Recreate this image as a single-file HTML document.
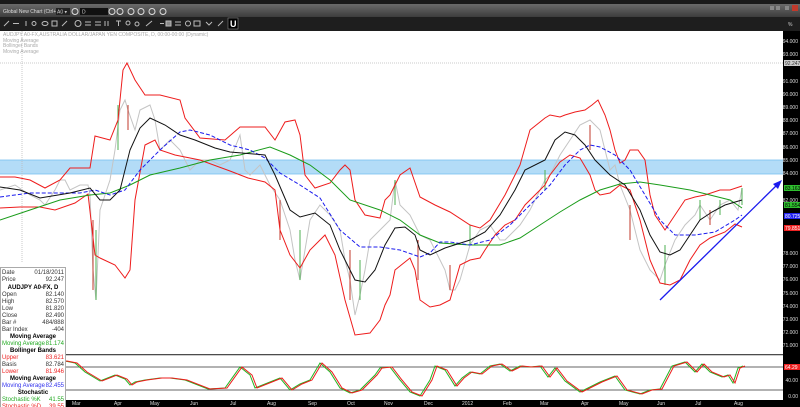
<!DOCTYPE html>
<html><head><meta charset="utf-8"><style>
html,body{margin:0;padding:0;background:#000;width:800px;height:407px;overflow:hidden;font-family:"Liberation Sans",sans-serif}
#wrap{position:relative;width:800px;height:407px}
</style></head><body><div id="wrap">
<svg width="800" height="407" viewBox="0 0 800 407" style="position:absolute;left:0;top:0" font-family="Liberation Sans, sans-serif">
<defs><linearGradient id="tb" x1="0" y1="0" x2="0" y2="1"><stop offset="0" stop-color="#6a6a6a"/><stop offset="1" stop-color="#3c3c3c"/></linearGradient></defs>
<rect x="0" y="0" width="800" height="4" fill="#1a1a1a"/>
<rect x="0" y="4" width="800" height="13" fill="url(#tb)"/>
<rect x="0" y="17" width="800" height="14" fill="#1e1e1e"/>
<text x="3" y="13" font-size="5" fill="#ddd">Global New Chart (Ctrl+1)</text>
<rect x="56" y="8" width="14" height="7" fill="#222"/><text x="57" y="13.5" font-size="5" fill="#ccc">A0 ▾</text>
<circle cx="75" cy="11.5" r="3" fill="none" stroke="#ddd"/>
<rect x="80" y="8" width="28" height="7" fill="#111"/><text x="82" y="13.5" font-size="5" fill="#ccc">D</text>
<circle cx="112" cy="11.5" r="3" fill="none" stroke="#ddd"/>
<circle cx="120" cy="11.5" r="3" fill="none" stroke="#ddd"/>
<circle cx="131" cy="11.5" r="3" fill="none" stroke="#ddd"/>
<circle cx="141" cy="11.5" r="3" fill="none" stroke="#ddd"/>
<circle cx="152" cy="11.5" r="3" fill="none" stroke="#ddd"/>
<circle cx="163" cy="11.5" r="3" fill="none" stroke="#ddd"/>
<g stroke="#bbb" stroke-width="1" fill="none">
<path d="M4 26 L9 21"/><path d="M13 23.5 H19"/><path d="M26 21 V26"/><circle cx="34" cy="23.5" r="2"/><ellipse cx="45" cy="23.5" rx="3" ry="2"/><rect x="52" y="21" width="5" height="5"/><path d="M62 26 L67 21"/>
<circle cx="78" cy="23.5" r="3"/><path d="M85 22H91M85 25H91"/><path d="M95 22H101M95 25H101"/><path d="M105 21V26M108 21V26"/>
<path d="M116 21H121M118.5 21V26"/><circle cx="128" cy="23" r="2"/><circle cx="137" cy="24" r="2"/>
<path d="M146 26L152 21"/><path d="M160 23.5H164"/><rect x="166" y="21" width="5" height="5" fill="#888"/><path d="M175 22H181M175 25H181"/><circle cx="188" cy="23.5" r="2.5"/><rect x="194" y="21" width="6" height="5"/><path d="M206 22L209 25L212 22"/><path d="M218 26L223 21"/>
</g>
<rect x="228" y="18" width="10" height="11" fill="#000" stroke="#888" stroke-width="0.6"/>
<text x="230" y="27" font-size="9" font-weight="bold" fill="#fff">U</text>
<rect x="770" y="6" width="4" height="4" fill="#888"/><rect x="776" y="6" width="4" height="4" fill="#888"/><rect x="785" y="6" width="4" height="4" fill="#888"/><rect x="792" y="5" width="6" height="6" fill="#c0392b"/>
<text x="788" y="26" font-size="5" fill="#ccc">%</text>
<rect x="0" y="31" width="783" height="323" fill="#fff"/>
<rect x="0" y="355" width="783" height="45" fill="#fff"/>
<rect x="0" y="400" width="800" height="7" fill="#000"/>
<rect x="783" y="31" width="17" height="376" fill="#000"/>
<rect x="0" y="160" width="783" height="14" fill="#b3dcf7"/>
<path d="M0 160H783M0 174H783" stroke="#74bff0" stroke-width="0.8"/>
<path d="M0 63H783" stroke="#bbb" stroke-width="0.8" stroke-dasharray="1,1"/>
<path d="M22 31V262" stroke="#bbb" stroke-width="0.8" stroke-dasharray="1,1"/>
<polyline fill="none" stroke="#c4c4c4" stroke-width="1" points="0,190 15,185 30,195 40,200 45,205 55,190 60,180 65,180 70,190 80,185 88,185 90,195 93,270 96,300 100,210 110,180 115,150 120,110 125,100 128,110 135,130 140,110 150,105 155,120 160,150 170,140 180,150 190,170 200,160 210,160 220,165 230,160 240,135 245,170 250,175 260,165 270,185 280,200 290,230 295,260 300,280 310,220 320,205 330,215 340,230 345,260 350,280 355,315 360,295 365,270 370,240 380,230 390,220 395,180 400,205 410,215 420,235 430,240 440,260 445,270 450,290 455,290 460,280 470,245 480,230 490,225 500,240 505,240 510,235 520,225 530,210 540,190 545,180 550,175 560,155 570,140 580,125 590,120 600,130 610,170 615,165 620,185 630,210 640,250 650,270 660,280 665,265 675,240 685,225 695,215 700,205 710,220 720,205 730,200 738,210 742,188"/>
<g stroke-width="1">
<path d="M96 300V230M118 150V105M300 280V230M360 300V260M395 205V180M470 245V225M545 190V170M665 285V245M742 205V188M700 220V200M720 215V200" stroke="#4caf50"/>
<path d="M93 220V290M128 105V130M280 200V240M350 250V300M418 240V280M450 265V290M590 125V150M630 205V240M710 210V225" stroke="#c0392b"/>
</g>
<polyline fill="none" stroke="#ee1c1c" stroke-width="1" points="0,177 15,177 30,180 45,188 60,180 70,168 90,168 95,136 110,140 118,120 123,70 127,63 135,80 145,95 160,95 180,100 185,118 200,138 225,140 240,127 265,127 275,140 285,122 295,120 300,135 305,175 315,188 330,183 340,170 345,165 350,170 355,200 365,215 380,218 385,200 390,195 395,185 400,175 410,168 420,197 435,205 450,212 470,225 480,228 490,220 505,195 520,165 530,130 545,118 550,115 560,117 565,115 575,112 585,110 592,105 598,100 605,115 610,130 615,150 620,163 625,160 630,150 638,150 645,160 650,195 655,215 665,230 675,215 685,200 695,197 705,195 720,190 730,190 742,186"/>
<polyline fill="none" stroke="#ee1c1c" stroke-width="1" points="0,208 20,207 40,207 55,210 75,203 88,194 95,255 100,258 115,265 125,278 130,270 135,200 145,145 155,140 160,150 175,155 200,160 230,171 248,178 265,182 275,190 280,230 290,255 300,268 310,250 320,240 325,235 335,255 345,300 355,335 370,333 380,320 385,305 390,295 395,270 405,262 410,258 415,270 420,300 430,307 440,305 450,300 460,265 470,260 480,258 485,250 495,235 505,225 515,220 525,205 540,190 545,185 550,175 560,162 570,155 580,158 590,175 595,190 600,195 610,193 620,185 630,190 640,220 650,260 660,283 670,285 680,280 690,260 700,245 710,238 725,232 735,224 742,227"/>
<polyline fill="none" stroke="#1a9c1a" stroke-width="1" points="0,220 30,210 60,200 90,195 110,193 130,185 150,175 180,168 210,160 240,155 270,147 290,155 310,165 330,180 350,200 380,210 400,220 420,235 440,243 470,245 500,245 520,238 540,225 560,212 580,200 600,190 620,184 640,182 660,185 690,190 710,195 730,200 742,208"/>
<polyline fill="none" stroke="#1b1bee" stroke-width="1" stroke-dasharray="4,2" points="0,197 30,193 80,193 95,190 110,195 125,190 140,170 160,150 180,132 190,130 210,135 230,145 250,150 265,158 280,173 300,185 320,198 340,230 360,247 380,247 400,250 420,257 430,253 440,242 450,242 470,245 490,240 510,225 530,205 550,185 565,165 580,150 590,145 600,147 615,155 630,170 645,195 660,220 675,235 695,235 715,232 735,220 742,215"/>
<polyline fill="none" stroke="#111" stroke-width="1" points="0,187 20,190 40,198 70,193 90,188 100,200 110,200 120,190 130,150 140,128 150,118 165,125 180,135 195,140 215,148 230,152 265,155 275,175 290,210 300,217 315,213 330,225 340,250 355,280 365,282 375,270 385,245 395,228 405,227 415,235 420,250 430,255 445,248 470,240 485,232 500,215 515,190 525,170 545,160 555,140 565,132 575,135 585,145 595,160 610,175 625,185 640,210 650,235 660,252 670,255 680,250 690,235 700,220 712,212 725,205 742,200"/>
<path d="M660 300L779 183" stroke="#1b1bee" stroke-width="1.3"/>
<path d="M782 180L773 184L778 189Z" fill="#1b1bee"/>
<path d="M0 355H783" stroke="#999" stroke-width="1"/>
<path d="M0 367H783M0 390H783" stroke="#333" stroke-width="0.8"/>
<polyline fill="none" stroke="#22b422" stroke-width="1" points="0,365 12,383 22,376 30,381 40,385 55,363 65,361 75,363 85,372 100,381 115,375 125,379 130,385 135,382 145,380 160,378 170,378 185,380 208,389 225,388 240,367 250,375 255,388 270,382 280,378 290,390 300,384 310,380 320,363 330,372 340,388 350,393 360,390 375,375 380,368 390,367 400,380 410,392 420,396 430,380 435,366 445,370 455,386 462,378 470,372 480,374 490,366 500,364 510,371 520,366 530,367 540,366 548,377 555,368 565,381 580,392 600,382 615,376 625,390 640,394 650,390 660,389 672,366 685,362 695,372 702,364 710,372 722,377 728,375 733,383 738,368 743,366"/>
<polyline fill="none" stroke="#ee1c1c" stroke-width="1" transform="translate(2,0)" points="0,365 12,383 22,376 30,381 40,385 55,363 65,361 75,363 85,372 100,381 115,375 125,379 130,385 135,382 145,380 160,378 170,378 185,380 208,389 225,388 240,367 250,375 255,388 270,382 280,378 290,390 300,384 310,380 320,363 330,372 340,388 350,393 360,390 375,375 380,368 390,367 400,380 410,392 420,396 430,380 435,366 445,370 455,386 462,378 470,372 480,374 490,366 500,364 510,371 520,366 530,367 540,366 548,377 555,368 565,381 580,392 600,382 615,376 625,390 640,394 650,390 660,389 672,366 685,362 695,372 702,364 710,372 722,377 728,375 733,383 738,368 743,366"/>
<g font-size="5" fill="#aaa"><text x="3" y="36">AUDJPY A0-FX,AUSTRALIA DOLLAR/JAPAN YEN COMPOSITE, D, 00:00-00:00 (Dynamic)</text><text x="3" y="42">Moving Average</text><text x="3" y="47">Bollinger Bands</text><text x="3" y="53">Moving Average</text></g>
<g font-size="5" fill="#ddd" text-anchor="end">
<text x="798" y="43">94.000</text><text x="798" y="56">93.000</text><text x="798" y="83">91.000</text><text x="798" y="96">90.000</text><text x="798" y="109">89.000</text><text x="798" y="122">88.000</text><text x="798" y="135">87.000</text><text x="798" y="149">86.000</text><text x="798" y="162">85.000</text><text x="798" y="175">84.000</text><text x="798" y="202">82.000</text><text x="798" y="255">78.000</text><text x="798" y="268">77.000</text><text x="798" y="281">76.000</text><text x="798" y="295">75.000</text><text x="798" y="308">74.000</text><text x="798" y="321">73.000</text><text x="798" y="334">72.000</text><text x="798" y="347">71.000</text><text x="798" y="382">40.00</text><text x="798" y="398">0.00</text>
</g>
<rect x="784" y="60" width="16" height="6" fill="#ccc"/><text x="785" y="65" font-size="5" fill="#333">92.247</text>
<rect x="784" y="185" width="16" height="6" fill="#2fbf2f"/><text x="785" y="190" font-size="5" fill="#000">83.163</text>
<rect x="784" y="202" width="16" height="6" fill="#2fbf2f"/><text x="785" y="207" font-size="5" fill="#000">81.554</text>
<rect x="784" y="213" width="16" height="6" fill="#2222ee"/><text x="785" y="218" font-size="5" fill="#fff">80.725</text>
<rect x="784" y="225" width="16" height="6" fill="#ee2222"/><text x="785" y="230" font-size="5" fill="#fff">79.851</text>
<rect x="784" y="364" width="16" height="6" fill="#ee2222"/><text x="785" y="369" font-size="5" fill="#fff">64.29</text>
<g font-size="5" fill="#ddd"><text x="72" y="405">Mar</text><text x="114" y="405">Apr</text><text x="150" y="405">May</text><text x="190" y="405">Jun</text><text x="230" y="405">Jul</text><text x="267" y="405">Aug</text><text x="308" y="405">Sep</text><text x="347" y="405">Oct</text><text x="384" y="405">Nov</text><text x="424" y="405">Dec</text><text x="462" y="405">2012</text><text x="503" y="405">Feb</text><text x="540" y="405">Mar</text><text x="581" y="405">Apr</text><text x="619" y="405">May</text><text x="657" y="405">Jun</text><text x="695" y="405">Jul</text><text x="734" y="405">Aug</text></g>
<rect x="0.5" y="267.5" width="65" height="140" fill="#fff" stroke="#aaa"/>
<g font-size="6">
<text x="2" y="274" fill="#333">Date</text><text x="64" y="274" fill="#333" text-anchor="end">01/18/2011</text>
<text x="2" y="281" fill="#333">Price</text><text x="64" y="281" fill="#333" text-anchor="end">92.247</text>
<text x="33" y="289" fill="#000" font-weight="bold" text-anchor="middle">AUDJPY A0-FX, D</text>
<text x="2" y="296" fill="#333">Open</text><text x="64" y="296" fill="#333" text-anchor="end">82.140</text>
<text x="2" y="303" fill="#333">High</text><text x="64" y="303" fill="#333" text-anchor="end">82.570</text>
<text x="2" y="310" fill="#333">Low</text><text x="64" y="310" fill="#333" text-anchor="end">81.820</text>
<text x="2" y="317" fill="#333">Close</text><text x="64" y="317" fill="#333" text-anchor="end">82.490</text>
<text x="2" y="324" fill="#333">Bar #</text><text x="64" y="324" fill="#333" text-anchor="end">484/888</text>
<text x="2" y="331" fill="#333">Bar Index</text><text x="64" y="331" fill="#333" text-anchor="end">-404</text>
<text x="33" y="338" fill="#000" font-weight="bold" text-anchor="middle">Moving Average</text>
<text x="2" y="345" fill="#22aa22">Moving Average</text><text x="64" y="345" fill="#22aa22" text-anchor="end">81.174</text>
<text x="33" y="352" fill="#000" font-weight="bold" text-anchor="middle">Bollinger Bands</text>
<text x="2" y="359" fill="#ee2222">Upper</text><text x="64" y="359" fill="#ee2222" text-anchor="end">83.621</text>
<text x="2" y="366" fill="#333">Basis</text><text x="64" y="366" fill="#333" text-anchor="end">82.784</text>
<text x="2" y="373" fill="#ee2222">Lower</text><text x="64" y="373" fill="#ee2222" text-anchor="end">81.946</text>
<text x="33" y="380" fill="#000" font-weight="bold" text-anchor="middle">Moving Average</text>
<text x="2" y="387" fill="#3333ee">Moving Average</text><text x="64" y="387" fill="#3333ee" text-anchor="end">82.455</text>
<text x="33" y="394" fill="#000" font-weight="bold" text-anchor="middle">Stochastic</text>
<text x="2" y="401" fill="#22aa22">Stochastic %K</text><text x="64" y="401" fill="#22aa22" text-anchor="end">41.55</text>
<text x="2" y="408" fill="#ee2222">Stochastic %D</text><text x="64" y="408" fill="#ee2222" text-anchor="end">39.55</text>
</g>
</svg>
</div></body></html>
